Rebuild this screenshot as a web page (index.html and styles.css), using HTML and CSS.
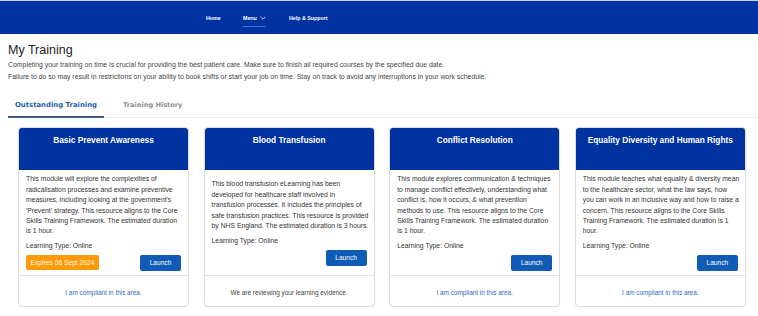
FILE: index.html
```html
<!DOCTYPE html>
<html lang="en">
<head>
<meta charset="utf-8">
<title>My Training</title>
<link rel="stylesheet" href="styles.css">
</head>
<body>
<header class="topbar">
  <nav class="nav">
    <a class="nav-item">Home</a>
    <a class="nav-item nav-active">Menu <svg class="chev" viewBox="0 0 10 6" width="6" height="4"><path d="M1 1 L5 5 L9 1" fill="none" stroke="#fff" stroke-width="1.3"/></svg></a>
    <a class="nav-item">Help &amp; Support</a>
  </nav>
</header>
<main class="page">
  <h1 class="title">My Training</h1>
  <p class="intro">Completing your training on time is crucial for providing the best patient care. Make sure to finish all required courses by the specified due date.<br>Failure to do so may result in restrictions on your ability to book shifts or start your job on time. Stay on track to avoid any interruptions in your work schedule.</p>
  <div class="tabs">
    <span class="tab tab-active">Outstanding Training</span>
    <span class="tab">Training History</span>
  </div>
  <section class="cards">
    <article class="card">
      <div class="card-head">Basic Prevent Awareness</div>
      <div class="card-body">
        <p class="desc">This module will explore the complexities of radicalisation processes and examine preventive measures, including looking at the government's 'Prevent' strategy. This resource aligns to the Core Skills Training Framework. The estimated duration is 1 hour.</p>
        <p class="ltype">Learning Type: Online</p>
        <div class="actions">
          <span class="badge">Expires 08 Sept 2024</span>
          <span class="btn">Launch</span>
        </div>
      </div>
      <div class="card-foot link">I am compliant in this area.</div>
    </article>
    <article class="card">
      <div class="card-head">Blood Transfusion</div>
      <div class="card-body">
        <p class="desc">This blood transfusion eLearning has been developed for healthcare staff involved in transfusion processes. It includes the principles of safe transfusion practices. This resource is provided by NHS England. The estimated duration is 3 hours.</p>
        <p class="ltype">Learning Type: Online</p>
        <div class="actions">
          <span class="btn">Launch</span>
        </div>
      </div>
      <div class="card-foot">We are reviewing your learning evidence.</div>
    </article>
    <article class="card">
      <div class="card-head">Conflict Resolution</div>
      <div class="card-body">
        <p class="desc">This module explores communication &amp; techniques to manage conflict effectively, understanding what conflict is, how it occurs, &amp; what prevention methods to use. This resource aligns to the Core Skills Training Framework. The estimated duration is 1 hour.</p>
        <p class="ltype">Learning Type: Online</p>
        <div class="actions">
          <span class="btn">Launch</span>
        </div>
      </div>
      <div class="card-foot link">I am compliant in this area.</div>
    </article>
    <article class="card">
      <div class="card-head">Equality Diversity and Human Rights</div>
      <div class="card-body">
        <p class="desc">This module teaches what equality &amp; diversity mean to the healthcare sector, what the law says, how you can work in an inclusive way and how to raise a concern. This resource aligns to the Core Skills Training Framework. The estimated duration is 1 hour.</p>
        <p class="ltype">Learning Type: Online</p>
        <div class="actions">
          <span class="btn">Launch</span>
        </div>
      </div>
      <div class="card-foot link">I am compliant in this area.</div>
    </article>
  </section>
</main>
</body>
</html>
```
FILE: styles.css
```css
* { box-sizing: border-box; }
html, body { margin: 0; padding: 0; background: #fff; }
body { font-family: "Liberation Sans", Arial, sans-serif; color: #333; }

.topbar {
  height: 34px;
  background: #0033a0;
  border-top: 1px solid #c9cfdc;
  display: flex;
  align-items: center;
}
.nav { display: flex; align-items: center; margin-left: 206px; }
.nav-item {
  color: #fff;
  font-size: 5.3px;
  font-weight: bold;
  position: relative;
  display: flex;
  align-items: center;
  gap: 3px;
  height: 16px;
}
.nav-item:nth-child(1) { width: 37px; }
.nav-item:nth-child(2) { width: 46px; }
.nav-active::after {
  content: "";
  position: absolute;
  left: 0; width: 23px; bottom: -1px;
  height: 1px;
  background: #2f7be0;
}
.chev { display: block; }

.page { padding: 0 0 0 8px; }
.title { font-size: 12.5px; font-weight: normal; margin: 9px 0 0; color: #222; line-height: 15px; }
.intro { font-size: 6.9px; line-height: 11.5px; margin: 1px 0 0; color: #444; }

.tabs {
  display: flex;
  margin-top: 15px;
  border-bottom: 1px solid #eceef1;
}
.tab {
  font-family: "DejaVu Sans", Verdana, sans-serif;
  font-size: 6.9px;
  font-weight: bold;
  color: #8e8e8e;
  padding: 4px 7px 7px;
  margin-right: 12px;
}
.tab + .tab { font-size: 6.6px; }
.tab-active { color: #2561a8; border-bottom: 2px solid #3e5a7c; margin-bottom: -1px; }

.cards {
  display: grid;
  grid-template-columns: repeat(4, 171px);
  column-gap: 14.6px;
  margin: 9px 0 0 10px;
}
.card {
  height: 180px;
  border: 1px solid #dcdcdc;
  border-radius: 4px;
  display: flex;
  flex-direction: column;
  overflow: hidden;
  box-shadow: 0 1px 2px rgba(0,0,0,0.06);
}
.card-head {
  height: 42px;
  flex: none;
  background: #0033a0;
  color: #fff;
  font-weight: bold;
  font-size: 8.3px;
  text-align: center;
  padding-top: 7px;
}
.card-body {
  flex: 1;
  padding: 4px 5.2px 4px 7px;
  display: flex;
  flex-direction: column;
  justify-content: center;
  border-bottom: 1px solid #e2e2e2;
}
.desc { font-size: 6.8px; line-height: 10.4px; margin: 0; color: #333; }
.ltype { font-size: 6.8px; line-height: 10px; margin: 4px 0 0; color: #333; }
.actions { display: flex; justify-content: space-between; align-items: center; margin-top: 4px; margin-right: 1.8px; }
.badge {
  background: #ff9a0a;
  color: #fff8e6;
  font-size: 6.7px;
  white-space: nowrap;
  height: 15px;
  display: flex;
  align-items: center;
  border-radius: 2px;
  width: 73px;
  justify-content: center;
}
.btn {
  margin-left: auto;
  background: #0f5bb5;
  color: #fff;
  font-size: 6.6px;
  width: 41px;
  height: 16px;
  display: flex;
  align-items: center;
  justify-content: center;
  border-radius: 2px;
}
.card-foot {
  height: 30px;
  flex: none;
  display: flex;
  align-items: center;
  justify-content: center;
  padding-top: 2px;
  font-size: 6.4px;
  color: #444;
}
.card-foot.link { color: #2f6cc0; }
```
